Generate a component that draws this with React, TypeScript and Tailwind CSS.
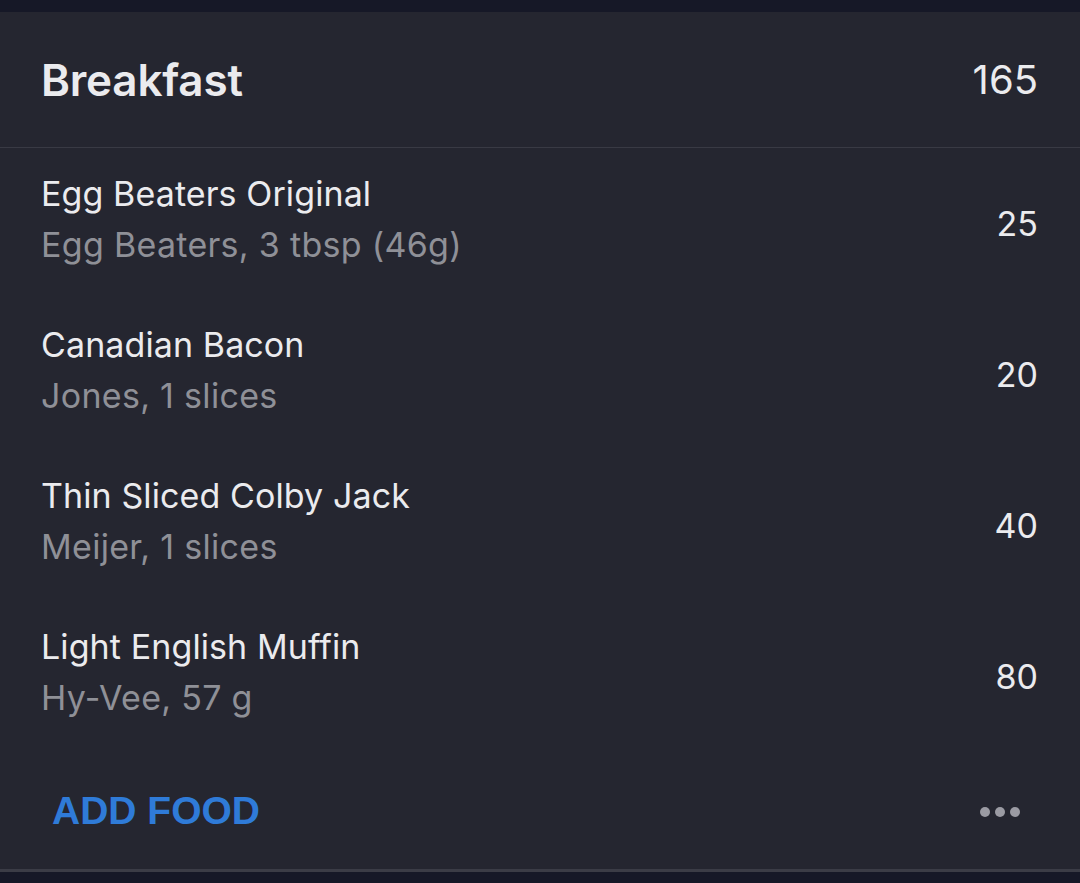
import React from 'react';

type Food = { name: string; detail: string; cal: number };

const foods: Food[] = [
  { name: 'Egg Beaters Original', detail: 'Egg Beaters, 3 tbsp (46g)', cal: 25 },
  { name: 'Canadian Bacon', detail: 'Jones, 1 slices', cal: 20 },
  { name: 'Thin Sliced Colby Jack', detail: 'Meijer, 1 slices', cal: 40 },
  { name: 'Light English Muffin', detail: 'Hy-Vee, 57 g', cal: 80 },
];

const FoodRow: React.FC<{ food: Food }> = ({ food }) => (
  <div className="h-[151px] flex items-center justify-between pl-[41px] pr-[42px]">
    <div className="flex flex-col pb-[7px]">
      <span className="text-[34px] leading-[50px] text-[#ebebee] tracking-[0.1px]">{food.name}</span>
      <span className="text-[34px] leading-[52px] text-[#8f9097] tracking-[0.3px]">{food.detail}</span>
    </div>
    <span className="text-[34px] text-[#ebebee]">{food.cal}</span>
  </div>
);

const App: React.FC = () => {
  return (
    <div className="w-[1080px] h-[883px] bg-[#161827] flex flex-col font-['Inter','Noto_Sans',sans-serif] overflow-hidden">
      <div className="h-[12px] shrink-0" />

      <div className="bg-[#252630] flex flex-col">
        {/* Meal header */}
        <div className="h-[136px] flex items-center justify-between pl-[41px] pr-[42px] border-b border-[#393a44]">
          <span className="text-[44px] font-semibold text-[#ebebee] tracking-[-0.2px]">Breakfast</span>
          <span className="text-[40px] text-[#ebebee]">165</span>
        </div>

        {foods.map((f) => (
          <FoodRow key={f.name} food={f} />
        ))}

        {/* Footer actions */}
        <div className="h-[120px] flex items-center justify-between pl-[52px] pr-[60px] border-b-[3px] border-[#3b3c46]">
          <span className="font-['Liberation_Sans',Arial,sans-serif] font-bold text-[39px] text-[#2f7bd8] pt-[2px]">ADD FOOD</span>
          <div className="flex gap-[5px] pt-[2px]">
            <span className="w-[10px] h-[10px] rounded-full bg-[#9b9ba3]" />
            <span className="w-[10px] h-[10px] rounded-full bg-[#9b9ba3]" />
            <span className="w-[10px] h-[10px] rounded-full bg-[#9b9ba3]" />
          </div>
        </div>
      </div>
    </div>
  );
};

export default App;
